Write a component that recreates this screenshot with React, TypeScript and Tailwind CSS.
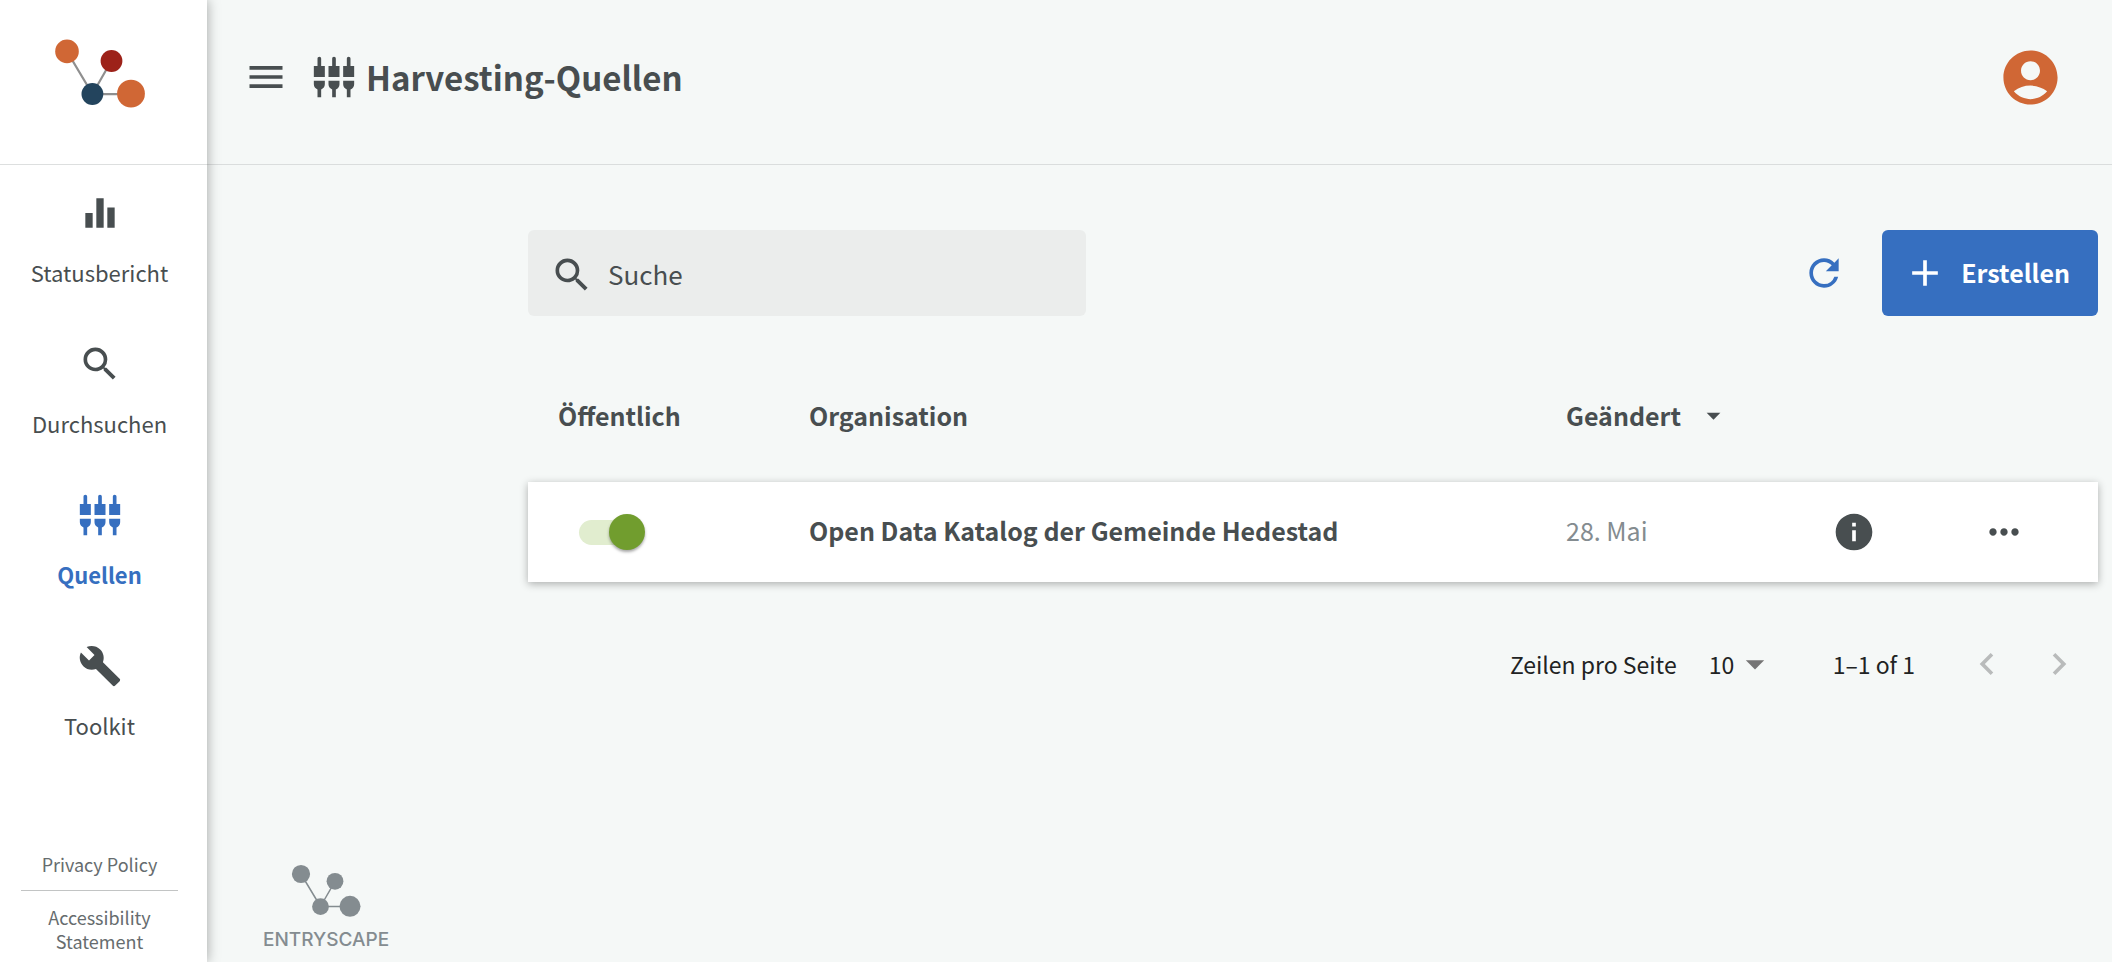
import { useState } from "react";
import type { ReactNode } from "react";
import type { IconType } from "react-icons";
import {
  MdAccountCircle,
  MdAdd,
  MdArrowDropDown,
  MdBuild,
  MdChevronLeft,
  MdChevronRight,
  MdEqualizer,
  MdInfo,
  MdMenu,
  MdMoreHoriz,
  MdRefresh,
  MdSearch,
  MdSettingsInputComponent,
} from "react-icons/md";

type NavEntry = { label: string; icon: IconType; active?: boolean };

const navEntries: NavEntry[] = [
  { label: "Statusbericht", icon: MdEqualizer },
  { label: "Durchsuchen", icon: MdSearch },
  { label: "Quellen", icon: MdSettingsInputComponent, active: true },
  { label: "Toolkit", icon: MdBuild },
];

function ColorLogo() {
  return (
    <svg viewBox="0 0 90 70" className="h-[70px] w-[90px]" aria-hidden="true">
      <g stroke="#8f8f8f" strokeWidth="2.2">
        <path d="M12 12.4L37.4 55M56.3 22L37.4 55M37.4 55.2H76" />
      </g>
      <circle cx="12" cy="12.4" r="11.8" fill="#d06735" />
      <circle cx="56.5" cy="22" r="10.9" fill="#9d2219" />
      <circle cx="37.4" cy="55" r="10.9" fill="#23445d" />
      <circle cx="76" cy="54.7" r="13.9" fill="#d06735" />
    </svg>
  );
}

function GreyLogo() {
  return (
    <svg viewBox="0 0 70 54" className="h-[54px] w-[70px]" aria-hidden="true">
      <g stroke="#848c90" strokeWidth="1.5">
        <path d="M10 10L29.5 42.5M44 17.3L29.5 42.5M29.5 42.5H59" />
      </g>
      <g fill="#848c90">
        <circle cx="10" cy="10" r="9.1" />
        <circle cx="44" cy="17.3" r="8.4" />
        <circle cx="29.5" cy="42.6" r="8.4" />
        <circle cx="59" cy="42.3" r="10.5" />
      </g>
    </svg>
  );
}

function Sidebar() {
  return (
    <aside className="z-10 flex w-[207px] shrink-0 flex-col bg-white shadow-[0_0_12px_rgba(0,0,0,0.35)]">
      <a
        href="#start"
        aria-label="EntryScape"
        className="flex h-[165px] shrink-0 justify-center border-b border-[#dddfdf] pt-[39px] pr-2"
      >
        <ColorLogo />
      </a>
      <nav className="flex flex-col pr-2">
        {navEntries.map(({ label, icon: Icon, active }) => (
          <a
            key={label}
            href={`#${label.toLowerCase()}`}
            aria-current={active ? "page" : undefined}
            className={`flex h-[151px] flex-col items-center gap-[21px] pt-[26px] text-[22px] leading-8 ${
              active ? "font-bold text-[#366fc0]" : "text-[#484e50]"
            }`}
          >
            <Icon className="size-11" />
            {label}
          </a>
        ))}
      </nav>
      <footer className="mt-auto mr-2 flex flex-col items-center px-[21px] pb-[9px] text-center text-[18px] leading-6 text-[#666c6e]">
        <a href="#privacy">Privacy Policy</a>
        <hr className="my-[14px] w-full border-[#c2c4c4]" />
        <a href="#accessibility">Accessibility Statement</a>
      </footer>
    </aside>
  );
}

function Header() {
  return (
    <header className="flex h-[165px] items-start justify-between border-b border-[#dadddd] pt-[45px] pr-[49px] pl-[37px]">
      <div className="flex h-16 items-center">
        <button type="button" aria-label="Menü">
          <MdMenu className="size-11" />
        </button>
        <MdSettingsInputComponent className="ml-6 size-11" />
        <h1 className="ml-[10px] text-[33px] leading-[48px] font-bold">Harvesting-Quellen</h1>
      </div>
      <button type="button" aria-label="Konto" className="text-[#d06735]">
        <MdAccountCircle className="size-[65px]" />
      </button>
    </header>
  );
}

function Toolbar() {
  return (
    <div className="flex items-center justify-between">
      <label className="flex h-[86px] w-[558px] items-center gap-[14px] rounded-md bg-[#ebedec] px-[22px] pt-1">
        <MdSearch className="size-11 shrink-0" />
        <input
          type="text"
          aria-label="Suche"
          placeholder="Suche"
          className="h-12 w-full bg-transparent pb-1 text-[26px] outline-none placeholder:text-[#484e50]"
        />
      </label>
      <div className="flex items-center gap-9">
        <button type="button" aria-label="Aktualisieren" className="text-[#366fc0]">
          <MdRefresh className="size-11" />
        </button>
        <button
          type="button"
          className="flex h-[86px] items-center gap-[14px] rounded-md bg-[#366fc0] pr-7 pl-[21px] text-[25px] font-bold text-white"
        >
          <MdAdd className="size-11" />
          Erstellen
        </button>
      </div>
    </div>
  );
}

function Toggle({ label }: { label: string }) {
  const [on, setOn] = useState(true);
  return (
    <label className="relative ml-[21px] flex h-9 w-[66px] items-center">
      <input
        type="checkbox"
        role="switch"
        aria-label={label}
        checked={on}
        onChange={() => setOn(!on)}
        className="peer sr-only"
      />
      <span className="h-[25px] w-[62px] rounded-full bg-[#d4d6d6] peer-checked:bg-[#e1edcf]" />
      <span className="absolute left-0 size-9 rounded-full bg-white shadow-[0_2px_3px_rgba(0,0,0,0.35)] peer-checked:left-[30px] peer-checked:bg-[#719d2e]" />
    </label>
  );
}

function HeadCell({ children }: { children?: ReactNode }) {
  return (
    <th scope="col" className="px-[30px] pb-[18px] font-bold">
      {children}
    </th>
  );
}

function SourcesTable() {
  return (
    <table className="mt-[50px] w-full table-fixed text-left text-[25px] leading-9">
      <colgroup>
        <col className="w-[251px]" />
        <col />
        <col className="w-[266px]" />
        <col className="w-[150px]" />
        <col className="w-[146px]" />
      </colgroup>
      <thead>
        <tr className="h-[116px]">
          <HeadCell>Öffentlich</HeadCell>
          <HeadCell>Organisation</HeadCell>
          <HeadCell>
            <button type="button" className="flex items-center gap-4">
              Geändert
              <MdArrowDropDown className="size-[33px]" />
            </button>
          </HeadCell>
          <td />
          <td />
        </tr>
      </thead>
      <tbody>
        <tr className="h-[100px] bg-white shadow-[0_2px_8px_rgba(0,0,0,0.3)]">
          <td className="px-[30px]">
            <Toggle label="Öffentlich" />
          </td>
          <td className="px-[30px] pb-1 font-bold">Open Data Katalog der Gemeinde Hedestad</td>
          <td className="px-[30px] pb-1 text-[#848c90]">28. Mai</td>
          <td className="px-[30px]">
            <button type="button" aria-label="Information" className="block">
              <MdInfo className="size-11" />
            </button>
          </td>
          <td className="px-[30px]">
            <button type="button" aria-label="Weitere Aktionen" className="block">
              <MdMoreHoriz className="size-11" />
            </button>
          </td>
        </tr>
      </tbody>
    </table>
  );
}

function Pagination() {
  return (
    <div className="mt-[60px] flex items-center justify-end pr-[17px] text-[23px] leading-8 text-[#212323]">
      <label htmlFor="rows">Zeilen pro Seite</label>
      <div className="relative ml-8 flex items-center">
        <select id="rows" defaultValue="10" className="w-[60px] appearance-none bg-transparent outline-none">
          <option>10</option>
          <option>25</option>
        </select>
        <MdArrowDropDown className="pointer-events-none absolute -right-2 size-11 text-[#757575]" />
      </div>
      <span className="ml-16">1–1 of 1</span>
      <div className="ml-[50px] flex gap-7 text-[#b9bbbb]">
        <button type="button" aria-label="Vorherige Seite" disabled>
          <MdChevronLeft className="size-11" />
        </button>
        <button type="button" aria-label="Nächste Seite" disabled>
          <MdChevronRight className="size-11" />
        </button>
      </div>
    </div>
  );
}

export default function App() {
  return (
    <div
      lang="de"
      className="flex min-h-screen bg-[#f5f8f7] font-['Noto_Sans_CJK_SC',sans-serif] text-[#484e50]"
    >
      <Sidebar />
      <div className="flex min-w-0 flex-1 flex-col">
        <Header />
        <main className="pt-[65px] pr-[14px] pl-[321px]">
          <Toolbar />
          <SourcesTable />
          <Pagination />
        </main>
        <footer className="mt-auto flex flex-col items-start pb-[10px] pl-[56px] text-[#848c90]">
          <div className="flex flex-col items-center">
            <GreyLogo />
            <span className="mt-[10px] font-['Inter',sans-serif] text-[19px] leading-6 font-medium">ENTRYSCAPE</span>
          </div>
        </footer>
      </div>
    </div>
  );
}
